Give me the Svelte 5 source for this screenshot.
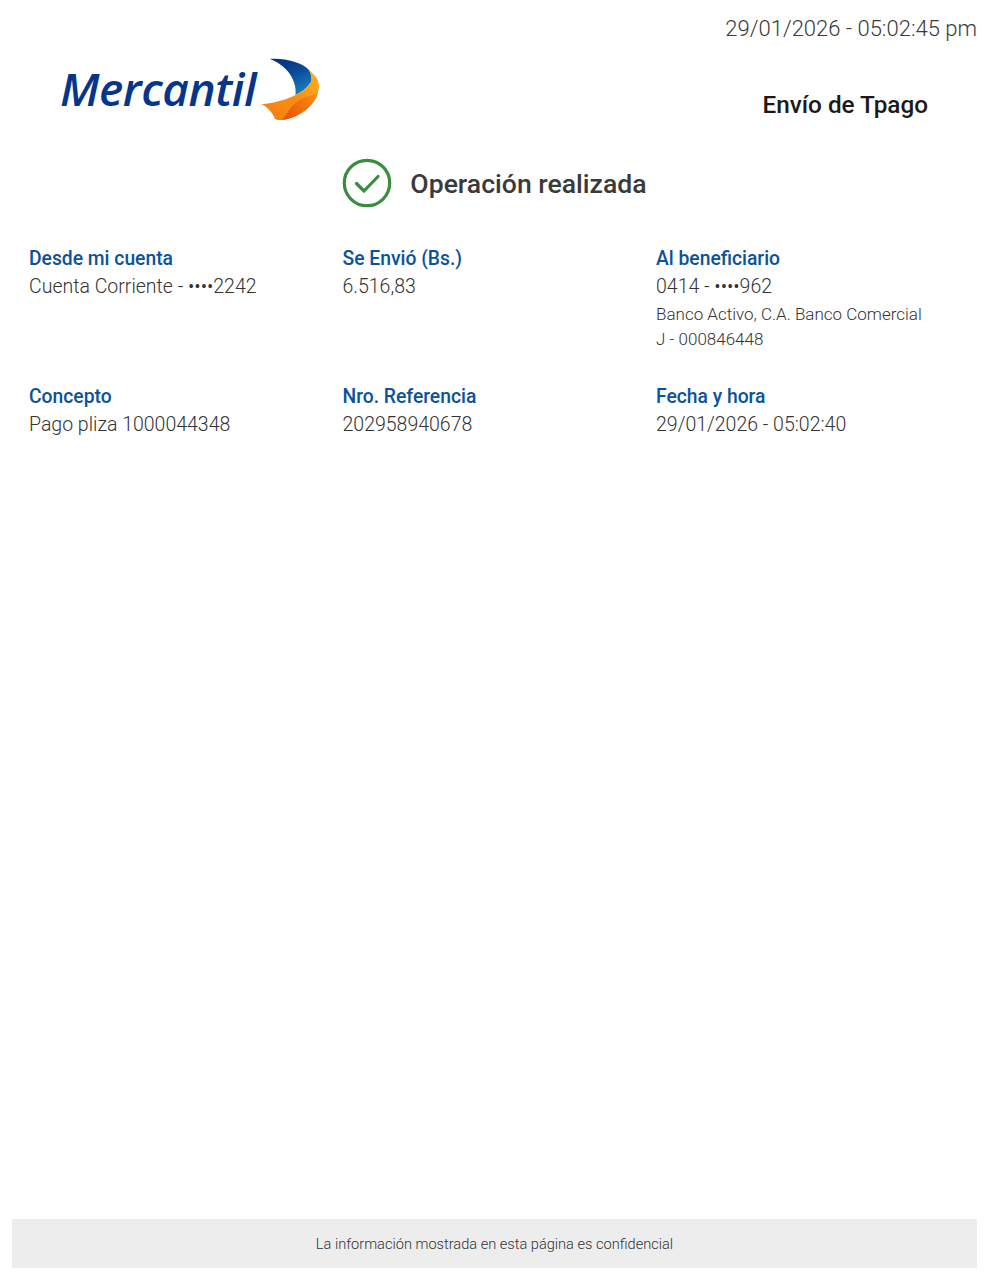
<script lang="ts">
  interface Field {
    label: string;
    value: string;
    extra?: string[];
  }

  const fields: Field[] = [
    { label: 'Desde mi cuenta', value: 'Cuenta Corriente - ••••2242' },
    { label: 'Se Envió (Bs.)', value: '6.516,83' },
    {
      label: 'Al beneficiario',
      value: '0414 - ••••962',
      extra: ['Banco Activo, C.A. Banco Comercial', 'J - 000846448'],
    },
    { label: 'Concepto', value: 'Pago pliza 1000044348' },
    { label: 'Nro. Referencia', value: '202958940678' },
    { label: 'Fecha y hora', value: '29/01/2026 - 05:02:40' },
  ];
</script>

<div class="page">
  <div class="timestamp">29/01/2026 - 05:02:45 pm</div>

  <header class="header">
    <div class="logo">
      <span class="logo-text">Mercantil</span>
      <svg class="logo-sail" width="60" height="64" viewBox="0 0 60 64">
        <defs>
          <linearGradient id="sailBlue" x1="0.2" y1="0" x2="0.75" y2="1">
            <stop offset="0" stop-color="#0a2f80" />
            <stop offset="0.45" stop-color="#0b4a98" />
            <stop offset="1" stop-color="#1584c4" />
          </linearGradient>
          <linearGradient id="sailOrange" x1="0" y1="1" x2="0.9" y2="0">
            <stop offset="0" stop-color="#f57c10" />
            <stop offset="0.55" stop-color="#f98f12" />
            <stop offset="1" stop-color="#fcb024" />
          </linearGradient>
          <linearGradient id="sailDeep" x1="0" y1="1" x2="1" y2="0.2">
            <stop offset="0" stop-color="#ea4e06" />
            <stop offset="1" stop-color="#f98a12" />
          </linearGradient>
        </defs>
        <path d="M9 1 C24 0 40 4 48 12 C51 17 51 21 50 24 C46 30 41 34 34.5 37 C36 25 29 9 9 1 Z" fill="url(#sailBlue)" />
        <path d="M0.5 46 C13 45.5 27 41 34.5 37 C41 34 46 30 50 24 C51 20 50 16 48 12 C54 17 58 22 58 28 C58 42 42 59 21 62 C18 62 15.5 62 14 61 C12 56 8 50 0.5 46 Z" fill="url(#sailOrange)" />
        <path d="M21 62 C27 56 28 49 37 43 C45 38 52 38 57 35 C54 47 39 60 21 62 Z" fill="url(#sailDeep)" />
      </svg>
    </div>
    <h1 class="title">Envío de Tpago</h1>
  </header>

  <div class="status">
    <svg class="status-icon" width="50" height="50" viewBox="0 0 50 50" fill="none" stroke="#388e3c">
      <circle cx="25" cy="25" r="22.7" stroke-width="3.2" />
      <path d="M14.5 25.5 L22 33 L36 18.5" stroke-width="3.2" stroke-linecap="round" stroke-linejoin="round" />
    </svg>
    <span class="status-text">Operación realizada</span>
  </div>

  <div class="details">
    {#each fields as field}
      <div class="field">
        <div class="label">{field.label}</div>
        <div class="value">{field.value}</div>
        {#if field.extra}
          {#each field.extra as line}
            <div class="extra">{line}</div>
          {/each}
        {/if}
      </div>
    {/each}
  </div>

  <footer class="footer">La información mostrada en esta página es confidencial</footer>
</div>

<style>
  :global(body) {
    margin: 0;
    background: #fff;
  }

  .page {
    height: 1280px;
    box-sizing: border-box;
    padding: 13px 12px 12px;
    display: flex;
    flex-direction: column;
    font-family: Roboto, "Noto Sans", sans-serif;
    overflow: hidden;
  }

  .timestamp {
    text-align: right;
    font-size: 22px;
    font-weight: 300;
    line-height: 32px;
    color: #3a3a3a;
  }

  .header {
    display: flex;
    justify-content: space-between;
    align-items: flex-start;
    padding: 13px 49px 0 48px;
    height: 91px;
    box-sizing: border-box;
  }

  .logo {
    display: flex;
    align-items: flex-start;
  }

  .logo-text {
    font-family: "Open Sans", sans-serif;
    font-style: italic;
    font-weight: 600;
    font-size: 46px;
    line-height: 61px;
    color: #05358c;
    letter-spacing: -0.45px;
  }

  .logo-sail {
    margin-left: 5px;
  }

  .title {
    margin: 31px 0 0;
    font-size: 24.3px;
    font-weight: 500;
    line-height: 32px;
    color: #1a1a1a;
  }

  .status {
    display: flex;
    align-items: center;
    justify-content: center;
    gap: 18px;
    height: 50px;
    margin-top: 22px;
  }

  .status-text {
    font-size: 26.6px;
    font-weight: 500;
    color: #3a3a3a;
  }

  .details {
    display: grid;
    grid-template-columns: repeat(3, 313.5px);
    padding: 36px 0 0 17px;
  }

  .field {
    min-height: 138px;
  }

  .label {
    font-size: 19.3px;
    font-weight: 500;
    line-height: 29px;
    color: #0a5299;
  }

  .value {
    font-size: 19.5px;
    font-weight: 300;
    line-height: 28.5px;
    color: #333;
  }

  .extra {
    font-size: 17px;
    font-weight: 300;
    line-height: 25.5px;
    color: #333;
  }

  .footer {
    margin-top: auto;
    height: 49px;
    display: flex;
    align-items: center;
    justify-content: center;
    background: #ededed;
    font-size: 14.6px;
    font-weight: 300;
    color: #333;
  }
</style>
